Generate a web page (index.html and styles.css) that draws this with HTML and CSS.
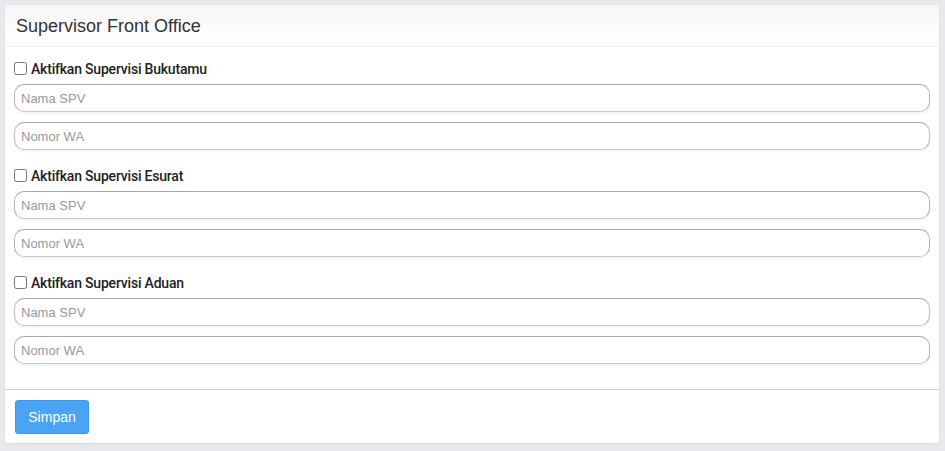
FILE: index.html
```html
<!DOCTYPE html>
<html>
<head>
<meta charset="utf-8">
<link rel="stylesheet" href="styles.css">
</head>
<body>
<div class="card">
  <div class="card-header">
    <h3 class="card-title">Supervisor Front Office</h3>
  </div>
  <div class="card-body">
    <div class="group">
      <label class="check"><input type="checkbox"> Aktifkan Supervisi Bukutamu</label>
      <input class="field" type="text" placeholder="Nama SPV">
      <input class="field" type="text" placeholder="Nomor WA">
    </div>
    <div class="group">
      <label class="check"><input type="checkbox"> Aktifkan Supervisi Esurat</label>
      <input class="field" type="text" placeholder="Nama SPV">
      <input class="field" type="text" placeholder="Nomor WA">
    </div>
    <div class="group">
      <label class="check"><input type="checkbox"> Aktifkan Supervisi Aduan</label>
      <input class="field" type="text" placeholder="Nama SPV">
      <input class="field" type="text" placeholder="Nomor WA">
    </div>
  </div>
  <div class="card-footer">
    <button class="btn" type="button">Simpan</button>
  </div>
</div>
</body>
</html>
```
FILE: styles.css
```css
html, body {
  margin: 0;
  padding: 0;
}
body {
  background: #e8e9ec;
  padding: 5px 6px 7px 5px;
  font-family: "Liberation Sans", Arial, sans-serif;
  color: #333;
}
.card {
  background: #fff;
  border-radius: 3px;
  box-shadow: 0 1px 2px rgba(0,0,0,0.06);
}
.card-header {
  height: 42px;
  box-sizing: border-box;
  border-bottom: 1px solid #eef0f3;
  background: linear-gradient(#f6f6f8, #fff);
  border-radius: 3px 3px 0 0;
  display: flex;
  align-items: center;
  padding: 0 11px;
}
.card-title {
  margin: 0;
  font-size: 18px;
  font-weight: normal;
  color: #333;
  padding-top: 1px;
}
.card-body {
  padding: 11px 9px 25px 9px;
  display: flex;
  flex-direction: column;
  gap: 15px;
}
.group {
  display: flex;
  flex-direction: column;
  gap: 10px;
}
.check {
  display: flex;
  align-items: center;
  font-family: Roboto, "Liberation Sans", sans-serif;
  font-weight: 500;
  font-size: 14px;
  color: #222;
  height: 17px;
  letter-spacing: -0.2px;
  margin-top: 2px;
  margin-bottom: -3px;
}
.check input {
  margin: 0 4px 0 0;
  width: 13px;
  height: 13px;
}
.field {
  box-sizing: border-box;
  width: 100%;
  height: 28px;
  margin: 0;
  border: 1px solid #c8c8c8;
  border-top-color: #a9a9a9;
  border-right-color: #b4b4b4;
  border-left-color: #b4b4b4;
  border-radius: 10px;
  padding: 0 6px;
  font-family: "Liberation Sans", Arial, sans-serif;
  font-size: 13px;
  color: #333;
  background: #fff;
  box-shadow: 0 2px 3px rgba(0,0,0,0.05);
  outline: none;
}
.field::placeholder {
  color: #999;
}
.card-footer {
  border-top: 1px solid #d2d2d2;
  padding: 10px 10px 9px 10px;
}
.btn {
  width: 74px;
  height: 34px;
  background: #4aa3f5;
  border: 1px solid #3e95e6;
  border-radius: 3px;
  color: #fff;
  font-family: "Liberation Sans", Arial, sans-serif;
  font-size: 14px;
  padding: 0;
}
```
